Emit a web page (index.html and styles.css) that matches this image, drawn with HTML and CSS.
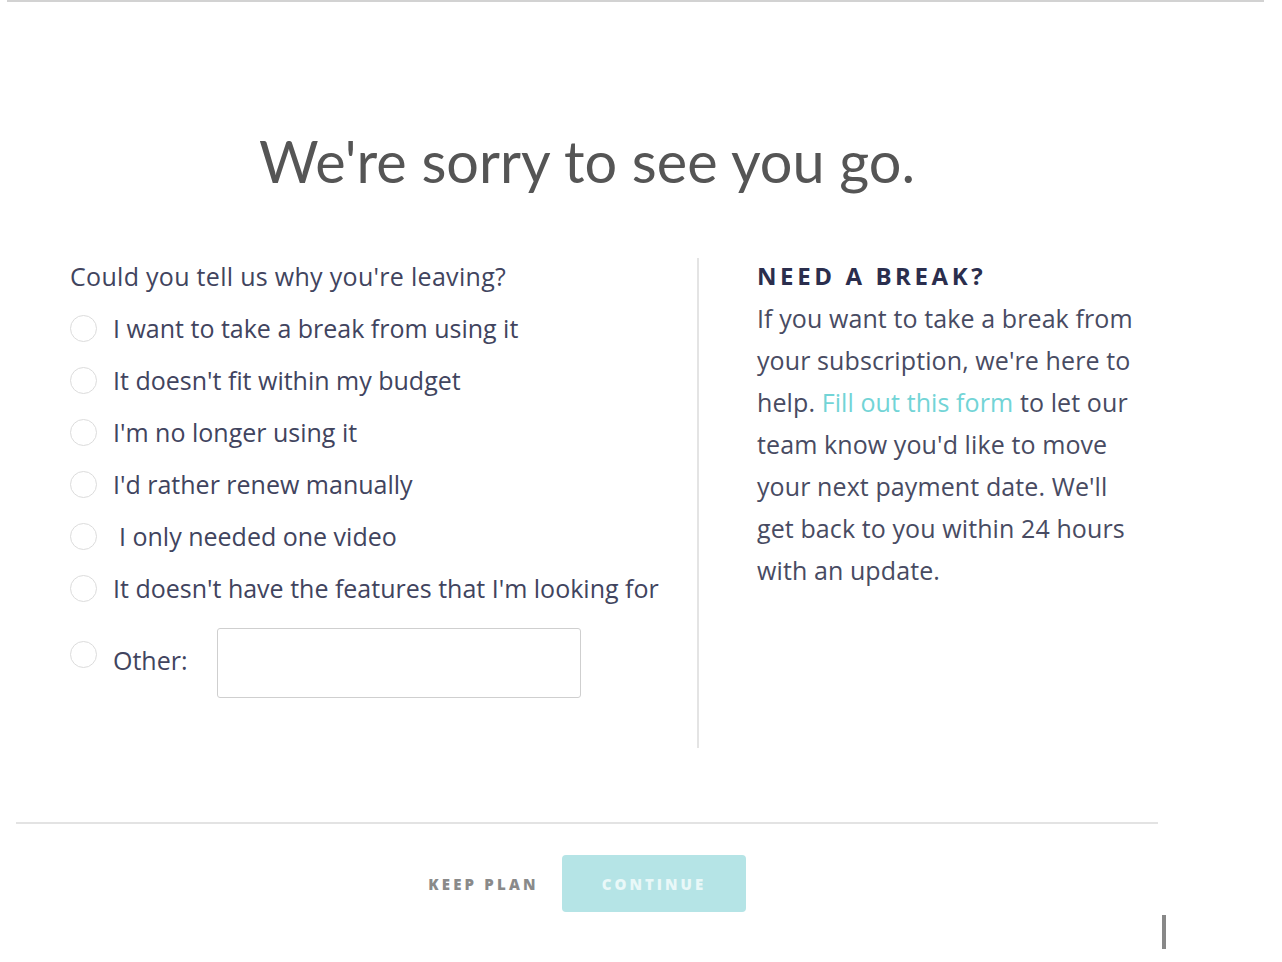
FILE: index.html
```html
<!DOCTYPE html>
<html lang="en">
<head>
<meta charset="utf-8">
<title>Cancel subscription</title>
<link rel="stylesheet" href="styles.css">
</head>
<body>
<div class="top-rule"></div>
<main class="modal">
  <h1 class="title">We're sorry to see you go.</h1>
  <section class="columns">
    <form class="reasons">
      <p class="question">Could you tell us why you're leaving?</p>
      <label class="option"><span class="radio"></span><span class="opt-text">I want to take a break from using it</span></label>
      <label class="option"><span class="radio"></span><span class="opt-text">It doesn't fit within my budget</span></label>
      <label class="option"><span class="radio"></span><span class="opt-text">I'm no longer using it</span></label>
      <label class="option"><span class="radio"></span><span class="opt-text">I'd rather renew manually</span></label>
      <label class="option"><span class="radio"></span><span class="opt-text opt-indent">I only needed one video</span></label>
      <label class="option"><span class="radio"></span><span class="opt-text">It doesn't have the features that I'm looking for</span></label>
      <label class="option option-other"><span class="radio radio-other"></span><span class="opt-text other-label">Other:</span><span class="other-input"></span></label>
    </form>
    <div class="divider"></div>
    <aside class="break">
      <h2 class="break-title">NEED A BREAK?</h2>
      <p class="break-text">If you want to take a break from your subscription, we're here to help. <a class="link" href="#">Fill out this form</a> to let our team know you'd like to move your next payment date. We'll get back to you within 24 hours with an update.</p>
    </aside>
  </section>
  <footer class="actions">
    <button class="btn-keep" type="button">KEEP PLAN</button>
    <button class="btn-continue" type="button">CONTINUE</button>
  </footer>
</main>
<div class="cursor"></div>
</body>
</html>
```
FILE: styles.css
```css
html, body {
  margin: 0;
  padding: 0;
  background: #ffffff;
}
body {
  font-family: "Open Sans", "Liberation Sans", sans-serif;
  color: #41445e;
  position: relative;
  width: 1282px;
  height: 962px;
  overflow: hidden;
}
.top-rule {
  height: 2px;
  margin: 0 18px 0 7px;
  background: #d2d2d2;
}
.modal {
  width: 1142px;
  margin-left: 16px;
}
.title {
  margin: 0;
  padding-top: 127px;
  height: 64px;
  line-height: 64px;
  font-family: "Lato", "Open Sans", sans-serif;
  font-size: 57.6px;
  font-weight: 400;
  color: #555555;
  text-align: center;
}
.columns {
  display: flex;
  margin-top: 65px;
  height: 490px;
}
.reasons {
  width: 681px;
  flex: none;
  padding-left: 54px;
  box-sizing: border-box;
  display: flex;
  flex-direction: column;
}
.question {
  margin: 0 0 8px;
  line-height: 36px;
  font-size: 25px;
  letter-spacing: 0.3px;
}
.option {
  display: flex;
  align-items: center;
  height: 52px;
  font-size: 25px;
  letter-spacing: 0;
}
.radio {
  width: 25px;
  height: 25px;
  border: 1.5px solid #dcdcdc;
  border-radius: 50%;
  flex: none;
  margin-right: 16px;
}
.opt-indent {
  padding-left: 6px;
}
.option-other {
  margin-top: 14px;
  height: 70px;
  align-items: flex-start;
}
.radio-other {
  margin-top: 13px;
}
.other-label {
  margin-top: 15px;
  width: 104px;
}
.other-input {
  width: 362px;
  height: 68px;
  border: 1px solid #cfcfcf;
  border-radius: 3px;
}
.divider {
  width: 2px;
  background: #e4e4e4;
  flex: none;
}
.break {
  margin-left: 58px;
  width: 390px;
}
.break-title {
  margin: 0 0 3px;
  line-height: 36px;
  font-size: 24px;
  font-weight: 700;
  letter-spacing: 3.6px;
  color: #2b2e4d;
}
.break-text {
  margin: 0;
  font-size: 25px;
  letter-spacing: 0.1px;
  line-height: 42px;
  color: #484b62;
}
.link {
  color: #72d4d6;
  text-decoration: none;
}
.actions {
  border-top: 2px solid #e3e3e3;
  margin-top: 74px;
  padding-top: 31px;
  display: flex;
  justify-content: center;
  align-items: center;
  gap: 23px;
}
.btn-keep {
  border: none;
  background: none;
  padding: 0;
  font-family: inherit;
  font-size: 15px;
  font-weight: 800;
  letter-spacing: 3.2px;
  color: #8a8a8a;
  width: 111px;
}
.btn-continue {
  width: 184px;
  height: 57px;
  border: none;
  border-radius: 4px;
  background: #b5e4e6;
  color: #e9f8f8;
  font-family: inherit;
  font-size: 15px;
  font-weight: 800;
  letter-spacing: 3px;
}
.cursor {
  position: absolute;
  left: 1162px;
  top: 915px;
  width: 4px;
  height: 34px;
  background: #888888;
}
```
